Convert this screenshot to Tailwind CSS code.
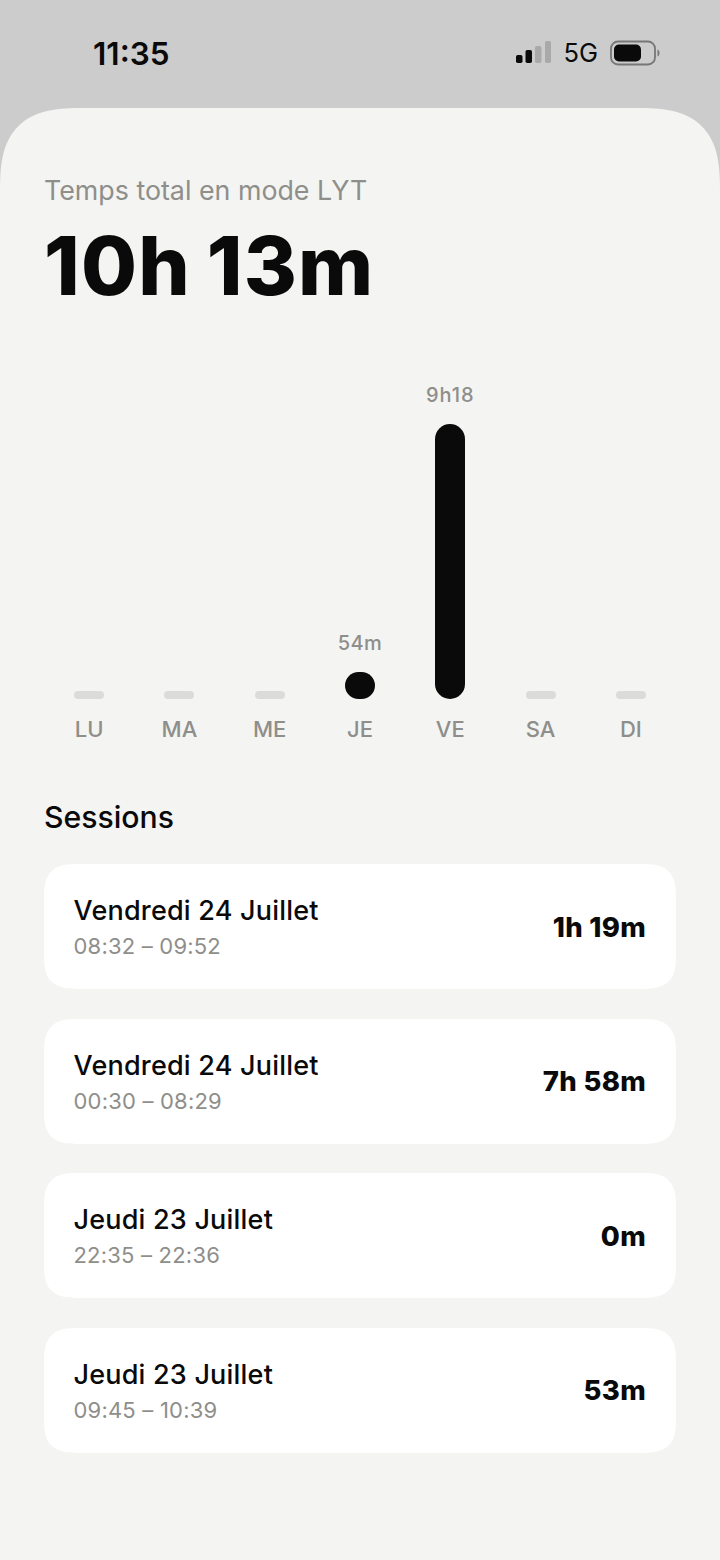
<!DOCTYPE html>
<html lang="fr">
<head>
<meta charset="UTF-8">
<title>Temps LYT</title>
<script src="https://cdn.jsdelivr.net/npm/@tailwindcss/browser@4"></script>
</head>
<body class="w-[720px] h-[1560px] overflow-hidden bg-[#cccccc] font-['Inter','Liberation_Sans',sans-serif]">
  <!-- status bar -->
  <div class="h-[108px] flex items-start justify-between pt-[35px] pl-[93px] pr-[60px]">
    <span class="text-[31.5px] leading-[38px] font-semibold text-[#0a0a0a]">11:35</span>
    <div class="flex items-center mt-[4px]">
      <svg width="36" height="24" viewBox="0 0 36 24">
        <rect x="1" y="14" width="6.5" height="8" rx="1.8" fill="#0a0a0a"/>
        <rect x="10.5" y="9" width="6.5" height="13" rx="1.8" fill="#0a0a0a"/>
        <rect x="20" y="5" width="6.5" height="17" rx="1.8" fill="#a9a9a9"/>
        <rect x="30" y="0" width="6" height="22" rx="1.8" fill="#a9a9a9"/>
      </svg>
      <span class="ml-[12px] text-[25.5px] leading-[28px] text-[#0a0a0a]">5G</span>
      <svg class="ml-[12px]" width="50" height="26" viewBox="0 0 50 26">
        <rect x="1" y="1.5" width="44" height="23" rx="7" fill="none" stroke="#777" stroke-width="1.8"/>
        <rect x="4" y="4.5" width="27" height="17" rx="5" fill="#0a0a0a"/>
        <path d="M47.5 9.5c1.5.6 2 2 2 3.5s-.5 2.9-2 3.5z" fill="#777"/>
      </svg>
    </div>
  </div>

  <!-- sheet -->
  <div class="h-[1452px] bg-[#f4f4f3] rounded-t-[84px] [corner-shape:superellipse(1.5)] px-[44px]">
    <p class="pt-[66px] text-[26.8px] leading-[32px] text-[#8e8e8a]">Temps total en mode LYT</p>
    <p class="mt-[15px] text-[81px] leading-[90px] font-extrabold text-[#0a0a0a] tracking-[1.2px] [word-spacing:-3px]">10h 13m</p>

    <!-- chart -->
    <div class="mt-[71px] grid grid-cols-7 w-[632px]">
      <div class="flex flex-col items-center justify-end h-[317px]"><div class="w-[30px] h-[8px] rounded-full bg-[#dbdbd9]"></div></div>
      <div class="flex flex-col items-center justify-end h-[317px]"><div class="w-[30px] h-[8px] rounded-full bg-[#dbdbd9]"></div></div>
      <div class="flex flex-col items-center justify-end h-[317px]"><div class="w-[30px] h-[8px] rounded-full bg-[#dbdbd9]"></div></div>
      <div class="flex flex-col items-center justify-end h-[317px]">
        <span class="text-[20px] leading-[24px] font-medium text-[#8e8e8a] mb-[17px] tracking-[0.4px]">54m</span>
        <div class="w-[30px] h-[27px] rounded-full bg-[#0a0a0a]"></div>
      </div>
      <div class="flex flex-col items-center justify-end h-[317px]">
        <span class="text-[20px] leading-[24px] font-medium text-[#8e8e8a] mb-[17px] tracking-[1px]">9h18</span>
        <div class="w-[30px] h-[275px] rounded-full bg-[#0a0a0a]"></div>
      </div>
      <div class="flex flex-col items-center justify-end h-[317px]"><div class="w-[30px] h-[8px] rounded-full bg-[#dbdbd9]"></div></div>
      <div class="flex flex-col items-center justify-end h-[317px]"><div class="w-[30px] h-[8px] rounded-full bg-[#dbdbd9]"></div></div>
      <span class="mt-[16px] text-center text-[22px] leading-[28px] font-medium text-[#8e8e8a]">LU</span>
      <span class="mt-[16px] text-center text-[22px] leading-[28px] font-medium text-[#8e8e8a]">MA</span>
      <span class="mt-[16px] text-center text-[22px] leading-[28px] font-medium text-[#8e8e8a]">ME</span>
      <span class="mt-[16px] text-center text-[22px] leading-[28px] font-medium text-[#8e8e8a]">JE</span>
      <span class="mt-[16px] text-center text-[22px] leading-[28px] font-medium text-[#8e8e8a]">VE</span>
      <span class="mt-[16px] text-center text-[22px] leading-[28px] font-medium text-[#8e8e8a]">SA</span>
      <span class="mt-[16px] text-center text-[22px] leading-[28px] font-medium text-[#8e8e8a]">DI</span>
    </div>

    <h2 class="mt-[56px] text-[30.2px] leading-[36px] font-medium text-[#0a0a0a]">Sessions</h2>

    <div class="mt-[29px] flex flex-col gap-[29.6px]">
      <div class="h-[125px] bg-white rounded-[34px] [corner-shape:superellipse(1.5)] pl-[29.5px] pr-[30px] flex items-center justify-between">
        <div class="pt-[1px]">
          <p class="text-[27px] leading-[34px] font-medium text-[#0a0a0a] tracking-[0.2px]">Vendredi 24 Juillet</p>
          <p class="mt-[4px] text-[22px] leading-[28px] text-[#8e8e8a] tracking-[0.2px]">08:32 – 09:52</p>
        </div>
        <span class="text-[27.5px] leading-[34px] font-extrabold text-[#0a0a0a] tracking-[0.3px]">1h 19m</span>
      </div>
      <div class="h-[125px] bg-white rounded-[34px] [corner-shape:superellipse(1.5)] pl-[29.5px] pr-[30px] flex items-center justify-between">
        <div class="pt-[1px]">
          <p class="text-[27px] leading-[34px] font-medium text-[#0a0a0a] tracking-[0.2px]">Vendredi 24 Juillet</p>
          <p class="mt-[4px] text-[22px] leading-[28px] text-[#8e8e8a] tracking-[0.2px]">00:30 – 08:29</p>
        </div>
        <span class="text-[27.5px] leading-[34px] font-extrabold text-[#0a0a0a] tracking-[0.3px]">7h 58m</span>
      </div>
      <div class="h-[125px] bg-white rounded-[34px] [corner-shape:superellipse(1.5)] pl-[29.5px] pr-[30px] flex items-center justify-between">
        <div class="pt-[1px]">
          <p class="text-[27px] leading-[34px] font-medium text-[#0a0a0a] tracking-[0.2px]">Jeudi 23 Juillet</p>
          <p class="mt-[4px] text-[22px] leading-[28px] text-[#8e8e8a] tracking-[0.2px]">22:35 – 22:36</p>
        </div>
        <span class="text-[27.5px] leading-[34px] font-extrabold text-[#0a0a0a] tracking-[0.3px]">0m</span>
      </div>
      <div class="h-[125px] bg-white rounded-[34px] [corner-shape:superellipse(1.5)] pl-[29.5px] pr-[30px] flex items-center justify-between">
        <div class="pt-[1px]">
          <p class="text-[27px] leading-[34px] font-medium text-[#0a0a0a] tracking-[0.2px]">Jeudi 23 Juillet</p>
          <p class="mt-[4px] text-[22px] leading-[28px] text-[#8e8e8a] tracking-[0.2px]">09:45 – 10:39</p>
        </div>
        <span class="text-[27.5px] leading-[34px] font-extrabold text-[#0a0a0a] tracking-[0.3px]">53m</span>
      </div>
    </div>
  </div>
</body>
</html>
